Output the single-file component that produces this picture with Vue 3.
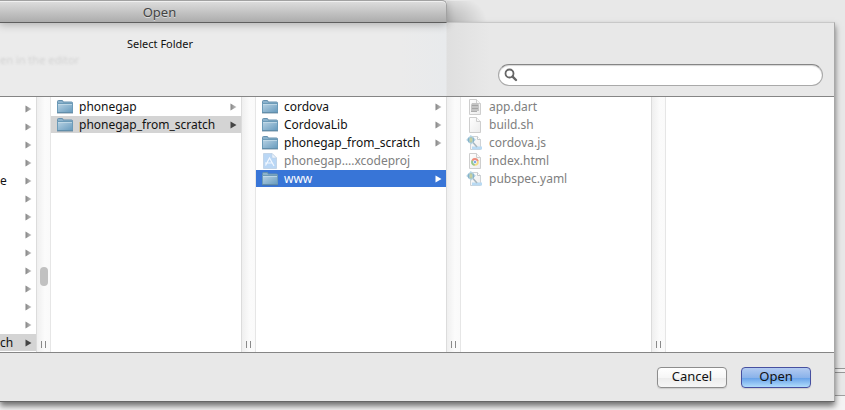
<script setup>
import { ref } from 'vue'

const query = ref('')

const columns = ref([
  {
    id: 'parent',
    cls: 'parent',
    thumb: true,
    rows: Array.from({ length: 14 }, (_, i) => ({
      name: i === 4 ? 'e' : i === 13 ? 'ch' : '',
      arrow: true,
      state: i === 13 ? 'path' : ''
    }))
  },
  {
    id: 'projects',
    rows: [
      { name: 'phonegap', icon: 'folder', arrow: true },
      { name: 'phonegap_from_scratch', icon: 'folder', arrow: true, state: 'path' }
    ]
  },
  {
    id: 'project',
    rows: [
      { name: 'cordova', icon: 'folder', arrow: true },
      { name: 'CordovaLib', icon: 'folder', arrow: true },
      { name: 'phonegap_from_scratch', icon: 'folder', arrow: true },
      { name: 'phonegap….xcodeproj', icon: 'xcode', state: 'off' },
      { name: 'www', icon: 'folder', arrow: true, state: 'active' }
    ]
  },
  {
    id: 'www',
    rows: [
      { name: 'app.dart', icon: 'exec', state: 'off' },
      { name: 'build.sh', icon: 'blank', state: 'off' },
      { name: 'cordova.js', icon: 'code', state: 'off' },
      { name: 'index.html', icon: 'chrome', state: 'off' },
      { name: 'pubspec.yaml', icon: 'code', state: 'off' }
    ]
  },
  { id: 'preview', cls: 'last', rows: [] }
])
</script>

<template>
  <main class="desktop">
    <svg class="defs" width="0" height="0" aria-hidden="true">
      <defs>
        <linearGradient id="folderFill" x1="0" y1="0" x2="1" y2="1">
          <stop offset="0" stop-color="#b9d3e4" />
          <stop offset="1" stop-color="#669abd" />
        </linearGradient>
        <linearGradient id="arrowFill" x1="0" y1="0" x2="1" y2="0">
          <stop offset="0" stop-color="#858585" />
          <stop offset="1" stop-color="#c4c4c4" />
        </linearGradient>
        <linearGradient id="pageFill" x1="0" y1="0" x2="1" y2="1">
          <stop offset="0" stop-color="#ffffff" />
          <stop offset="1" stop-color="#ececec" />
        </linearGradient>
      </defs>
    </svg>
    <div class="backdrop"></div>
    <header class="titlebar"><h1>Open</h1></header>
    <section class="sheet">
      <div class="top">
        <p class="prompt">Select Folder</p>
        <p class="ghost">en in the editor</p>
        <label class="search">
          <svg width="14" height="14" viewBox="0 0 14 14" aria-hidden="true">
            <circle cx="5.5" cy="5.5" r="4" fill="none" stroke="#666" stroke-width="1.8" />
            <path d="M8.6 8.6 12 12" stroke="#666" stroke-width="2.4" stroke-linecap="round" />
          </svg>
          <input v-model="query" type="text" aria-label="Search" />
        </label>
      </div>

      <div class="browser">
        <template v-for="(col, ci) in columns" :key="col.id">
          <ul class="column" :class="col.cls">
            <li v-for="(row, ri) in col.rows" :key="ri" class="row" :class="row.state">
              <svg v-if="row.icon" class="icon" width="18" height="16" viewBox="0 0 18 16" aria-hidden="true">
                <g v-if="row.icon === 'folder'">
                  <path d="M1.5 13.5V2.5Q1.5 1.5 2.5 1.5H6Q7 1.5 7 2.5V3H15.5Q16.5 3 16.5 4V13.5Z" fill="#8bb2cc" stroke="#6691ae" />
                  <path d="M1.5 4.5H16.5V13.5H1.5Z" fill="url(#folderFill)" stroke="#6c9bb8" />
                  <path d="M2 5.5H16" stroke="#cbdfeb" stroke-opacity=".7" />
                  <path d="M1 14H17" stroke="#50758f" stroke-opacity=".7" />
                </g>
                <g v-else-if="row.icon === 'xcode'">
                  <path d="M2.5 .5H11L15.5 5V15.5H2.5Z" fill="#bad7f5" stroke="#c3d5e8" />
                  <path d="M11 .5V5H15.5Z" fill="#eaf4ff" stroke="#bfd0e2" stroke-width=".6" />
                  <path d="M4.5 12.5 8.5 5 13 13M4 10H11" fill="none" stroke="#f2f8ff" stroke-width="1.2" />
                </g>
                <g v-else-if="row.icon === 'code'">
                  <path d="M4.5 1.5H11.5L14.5 4.500V14.5H4.5Z" fill="url(#pageFill)" stroke="#cfd2d5" />
                  <path d="M11.5 1.5V4.5H14.5" fill="#fff" stroke="#c5c9cc" />
                  <path d="M6 11.500H16V14.500H6Z" fill="#b9daf3" />
                  <path d="M7 7.500 11 12" stroke="#a9b8c0" stroke-width="1.6" />
                  <path d="M5 .5 9.300 4.800 5 9.200 .7 4.800Z" fill="#b5d5e6" stroke="#b5d5e6" stroke-linejoin="round" />
                  <path d="M3 2.500Q1.500 5 3 7.500M7 2.500Q8.500 5 7 7.500" fill="none" stroke="#83afc6" />
                  <ellipse cx="5" cy="4.900" rx="1.300" ry="2.600" fill="#d2d59c" stroke="#98b9a9" stroke-width=".6" />
                </g>
                <g v-else>
                  <path d="M3.5 .5H10.5L14.5 4.5V15.5H3.5Z" fill="url(#pageFill)" stroke="#cecece" />
                  <path d="M10.5 .5V4.5H14.5" fill="#f8f8f8" stroke="#cecece" />
                  <g v-if="row.icon === 'exec'">
                    <path d="M6 4H12L13 6V12H5V6Z" fill="#c4c4c4" />
                    <path d="M6 6.5H12M6 9.5H12" stroke="#a5a5a5" />
                    <path d="M5 12.5H11" stroke="#adadad" />
                  </g>
                  <g v-if="row.icon === 'chrome'">
                    <circle cx="9" cy="9" r="3.8" fill="#f5da83" />
                    <path d="M9 9 5.500 7.300A3.800 3.800 0 0 1 12.600 7.700Z" fill="#ee8a80" />
                    <path d="M9 9 5.500 7.300A3.800 3.800 0 0 0 8.600 12.800Z" fill="#91c791" />
                    <circle cx="9" cy="9" r="1.7" fill="#7da9e8" stroke="#fff" stroke-width=".7" />
                  </g>
                </g>
              </svg>
              <span class="name">{{ row.name }}</span>
              <svg v-if="row.arrow" class="arrow" width="7" height="8" viewBox="0 0 7 8" aria-hidden="true">
                <path d="M.5 .5V7.5L6.5 4Z" />
              </svg>
            </li>
          </ul>
          <div v-if="ci < columns.length - 1" class="divider">
            <i v-if="col.thumb" class="thumb"></i>
            <i class="grip"></i>
          </div>
        </template>
      </div>

      <footer class="actions">
        <button type="button">Cancel</button>
        <button type="button" class="primary">Open</button>
      </footer>
    </section>
  </main>
</template>

<style>
body {
  background: #f4f4f4;
}
</style>

<style scoped>
.desktop {
  position: relative;
  min-height: 100vh;
  overflow: hidden;
  display: flex;
  flex-direction: column;
  font-family: "Noto Sans", "Open Sans", sans-serif;
  font-size: 12px;
  color: #111;
}
.defs {
  position: absolute;
}
.backdrop {
  position: absolute;
  inset: 0 0 14px;
  background: #e8e8e8;
  border-bottom: 1px solid #a0a0a0;
}
.backdrop::after {
  content: "";
  position: absolute;
  inset: auto 0 22px;
  height: 3px;
  background: #f0f0f0;
  border: solid #979797;
  border-width: 1px 0;
}
.titlebar {
  position: relative;
  z-index: 2;
  box-sizing: border-box;
  width: 53%;
  height: 23px;
  margin-left: -1px;
  border: 1px solid #a2a2a2;
  border-bottom-color: #5e5e5e;
  border-radius: 0 5px 0 0;
  background: linear-gradient(#dedede, #acacac);
  box-shadow: inset 0 1px #f0f0f0, 0 2px 8px rgba(0, 0, 0, 0.25);
}
.titlebar::after {
  content: "";
  position: absolute;
  inset: 0 -42px 0 100%;
  margin-left: 1px;
  background: radial-gradient(ellipse 40px 28px at 0 100%, rgba(0, 0, 0, 0.22), transparent);
}
h1 {
  margin: 0;
  padding: 0 127px 0 0;
  font-size: 13px;
  font-weight: 400;
  line-height: 22px;
  text-align: center;
  color: #444;
  text-shadow: 0 1px #ddd;
}
.sheet {
  position: relative;
  z-index: 1;
  box-sizing: border-box;
  margin: -1px 10px 0 0;
  border: solid #c8c8c8;
  border-width: 1px 1px 1px 0;
  border-right-color: #a8a8a8;
  border-bottom-color: #666;
  background: #e8e8e8;
  box-shadow: 0 4px 6px rgba(0, 0, 0, 0.55);
}
.top {
  position: relative;
  display: flex;
  flex-direction: column;
  height: 73px;
  border-bottom: 1px solid #858585;
  background: linear-gradient(90deg, #ebebeb 400px, #e8eaec 446px, #dfdfdf 447px, #e8e8e8 490px);
}
.prompt {
  margin: 13px 0 0 127px;
  font-size: 11px;
  line-height: 16px;
}
.ghost {
  margin: 0;
  font-size: 11px;
  line-height: 16px;
  color: #d2d2d2;
  filter: blur(1px);
}
.search {
  box-sizing: border-box;
  display: flex;
  align-items: center;
  align-self: flex-end;
  width: 325px;
  height: 22px;
  margin: -4px 11px 0 0;
  padding: 0 10px 0 5px;
  border: 1px solid #a9a9a9;
  border-top-color: #858585;
  border-radius: 11px;
  background: #fff;
  box-shadow: inset 0 1px 1px #d5d5d5;
}
.search input {
  flex: 1;
  min-width: 0;
  border: 0;
  outline: 0;
  background: none;
  font: inherit;
}
.browser {
  display: flex;
  height: 255px;
  background: #fff;
}
.column {
  flex: 0 0 190px;
  box-sizing: border-box;
  min-width: 0;
  margin: 0;
  padding: 1px 0 0;
  list-style: none;
}
.parent {
  flex-basis: 36px;
  padding-top: 3px;
}
.last {
  flex: 1;
}
.row {
  box-sizing: border-box;
  display: flex;
  align-items: center;
  height: 17px;
  margin-bottom: 1px;
  padding: 0 4px 0 5px;
  line-height: 17px;
}
.parent .row {
  padding-left: 0;
}
.icon {
  flex: none;
  margin-right: 5px;
}
.name {
  flex: 1;
  white-space: nowrap;
}
.arrow {
  fill: url(#arrowFill);
}
.path {
  background: #d4d4d4;
}
.path .arrow {
  fill: #444;
}
.off {
  color: #808080;
}
.active {
  background: #3875d7;
  color: #fff;
}
.active .arrow {
  fill: #fff;
}
.divider {
  flex: 0 0 15px;
  box-sizing: border-box;
  display: flex;
  flex-direction: column;
  align-items: center;
  justify-content: space-between;
  padding: 170px 0 4px;
  border: solid #dcdcdc;
  border-width: 0 1px;
  border-right-color: #e6e6e6;
  background: linear-gradient(90deg, #efefef, #fbfbfb 60%, #fafafa);
}
.thumb {
  width: 8px;
  height: 19px;
  border-radius: 4px;
  background: #c1c1c1;
}
.grip {
  box-sizing: border-box;
  width: 5px;
  height: 7px;
  margin-top: auto;
  border: solid #8a8a8a;
  border-width: 0 1px;
}
.actions {
  display: flex;
  justify-content: flex-end;
  gap: 14px;
  padding: 14px 23px 13px 0;
  border-top: 1px solid #858585;
}
button {
  box-sizing: border-box;
  width: 70px;
  height: 21px;
  padding: 0 0 2px;
  border: 1px solid #8d8d8d;
  border-radius: 4px;
  background: linear-gradient(#fff, #f6f6f6 50%, #ececec 51%, #f6f6f6);
  box-shadow: 0 1px 1px #ccc;
  font: inherit;
  font-size: 13px;
  line-height: 17px;
  color: #111;
}
.primary {
  border-color: #4750a0;
  background: linear-gradient(#b3cbf1, #8bb3ea 50%, #659fe8 51%, #b0dcfb);
}
</style>
